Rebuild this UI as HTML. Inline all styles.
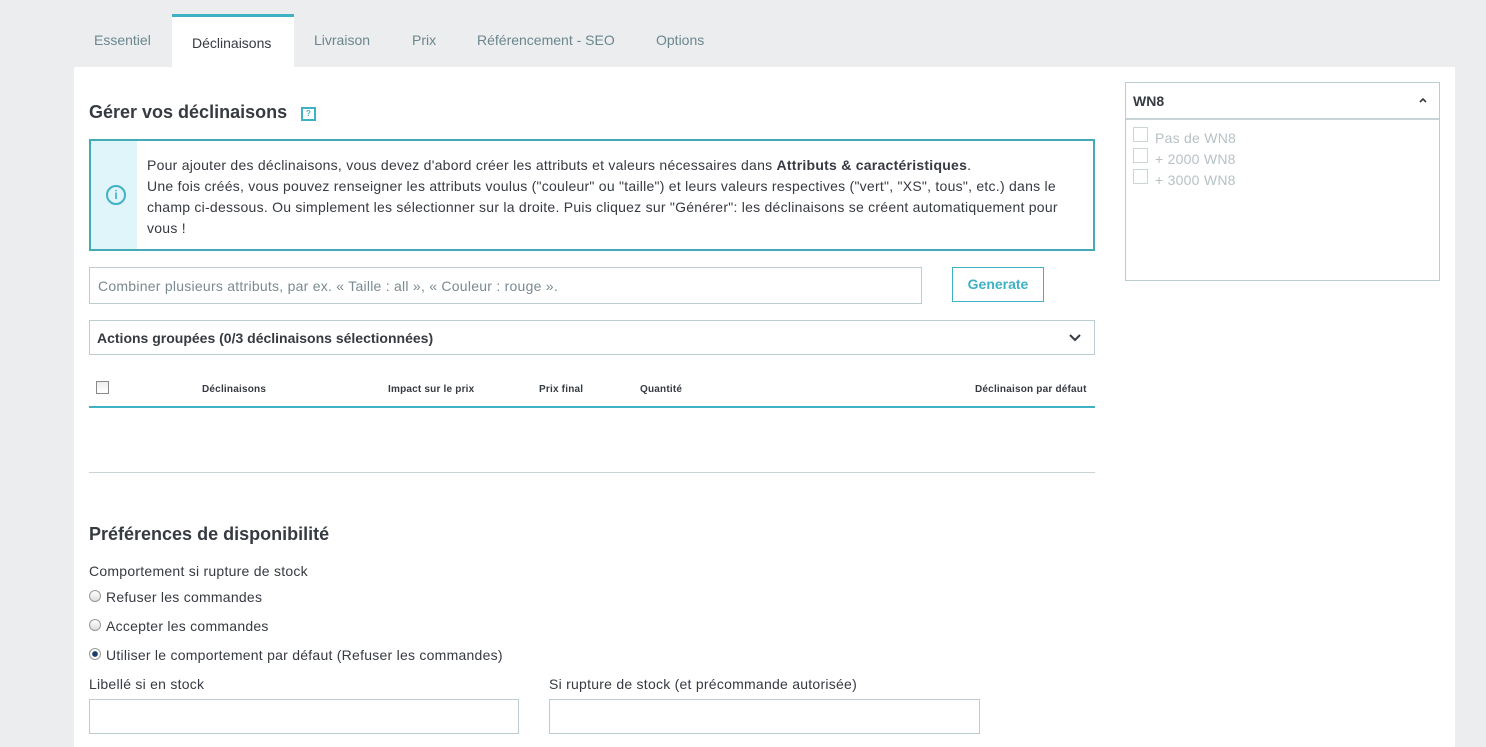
<!DOCTYPE html>
<html><head><meta charset="utf-8"><style>
*{margin:0;padding:0;box-sizing:border-box}
body{width:1486px;height:738px;overflow:hidden;background:#ebedef;font-family:"Liberation Sans",sans-serif;color:#363a41;position:relative}
.a{position:absolute;white-space:nowrap}
.tab{position:absolute;top:32px;font-size:14px;color:#6c868e}
.t{font-size:14px;letter-spacing:0.25px}
.in{position:absolute;border:1px solid #bbcdd2;background:#fff}
.rad{position:absolute;width:12px;height:12px;border:1px solid #999;border-radius:50%;background:linear-gradient(#fff,#ddd)}
.cb{position:absolute;width:15px;height:15px;border:1px solid #ccd5d8;background:#fff}
.th{position:absolute;top:384px;font-size:10px;font-weight:bold;color:#363a41;letter-spacing:0.2px}
</style></head><body>
<div class="tab" style="left:94px">Essentiel</div>
<div style="position:absolute;left:172px;top:14px;width:122px;height:54px;background:#fff;border-top:3px solid #3fb1c4"></div>
<div class="tab" style="left:192px;top:35px;color:#363a41">Déclinaisons</div>
<div class="tab" style="left:314px">Livraison</div>
<div class="tab" style="left:412px">Prix</div>
<div class="tab" style="left:477px">Référencement - SEO</div>
<div class="tab" style="left:656px">Options</div>
<div style="position:absolute;left:74px;top:67px;width:1381px;height:680px;background:#fff"></div>

<div class="a" style="left:89px;top:102px;font-size:18px;font-weight:bold">Gérer vos déclinaisons</div>
<div style="position:absolute;left:301px;top:107px;width:15px;height:14px;border:2px solid #3fb1c4;font-size:8px;color:#3fb1c4;text-align:center;line-height:10px;font-weight:bold">?</div>

<div style="position:absolute;left:89px;top:139px;width:1006px;height:112px;border:2px solid #43aab6;background:#fff">
 <div style="position:absolute;left:0;top:0;width:46px;height:108px;background:#dff5f9"></div>
 <div style="position:absolute;left:15px;top:44px;width:20px;height:20px;border:2px solid #3fb1c4;border-radius:50%;color:#3fb1c4;font-size:12px;font-weight:bold;text-align:center;line-height:16px">i</div>
 <div class="a t" style="left:56px;top:14px;line-height:21px">Pour ajouter des déclinaisons, vous devez d'abord créer les attributs et valeurs nécessaires dans <b>Attributs &amp; caractéristiques</b>.<br>Une fois créés, vous pouvez renseigner les attributs voulus ("couleur" ou "taille") et leurs valeurs respectives ("vert", "XS", tous", etc.) dans le<br>champ ci-dessous. Ou simplement les sélectionner sur la droite. Puis cliquez sur "Générer": les déclinaisons se créent automatiquement pour<br>vous !</div>
</div>

<div class="in" style="left:89px;top:267px;width:833px;height:37px"></div>
<div class="a t" style="left:98px;top:278px;color:#7a8a90">Combiner plusieurs attributs, par ex. « Taille : all », « Couleur : rouge ».</div>
<div style="position:absolute;left:952px;top:267px;width:92px;height:35px;border:1px solid #3fb1c4;color:#3fb1c4;font-size:14px;font-weight:bold;text-align:center;line-height:33px">Generate</div>

<div class="in" style="left:89px;top:320px;width:1006px;height:35px"></div>
<div class="a" style="left:97px;top:330px;font-size:14px;font-weight:bold">Actions groupées (0/3 déclinaisons sélectionnées)</div>
<svg style="position:absolute;left:1068px;top:333px" width="14" height="10"><path d="M2 2 L7 7 L12 2" stroke="#363a41" stroke-width="2" fill="none"/></svg>

<div style="position:absolute;left:96px;top:381px;width:13px;height:13px;border:1px solid #888;background:linear-gradient(#eee,#fff)"></div>
<div class="th" style="left:202px">Déclinaisons</div>
<div class="th" style="left:388px">Impact sur le prix</div>
<div class="th" style="left:539px">Prix final</div>
<div class="th" style="left:640px">Quantité</div>
<div class="th" style="left:975px">Déclinaison par défaut</div>
<div style="position:absolute;left:89px;top:406px;width:1006px;height:2px;background:#3fb1c4"></div>
<div style="position:absolute;left:89px;top:472px;width:1006px;height:1px;background:#c8d3d6"></div>

<div class="a" style="left:89px;top:524px;font-size:18px;font-weight:bold">Préférences de disponibilité</div>
<div class="a t" style="left:89px;top:563px">Comportement si rupture de stock</div>
<div class="rad" style="left:89px;top:590px"></div><div class="a t" style="left:106px;top:589px">Refuser les commandes</div>
<div class="rad" style="left:89px;top:619px"></div><div class="a t" style="left:106px;top:618px">Accepter les commandes</div>
<div class="rad" style="left:89px;top:648px;background:radial-gradient(circle,#1a3d6a 35%,#fff 45%)"></div><div class="a t" style="left:106px;top:647px">Utiliser le comportement par défaut (Refuser les commandes)</div>
<div class="a t" style="left:89px;top:676px">Libellé si en stock</div>
<div class="a t" style="left:549px;top:676px">Si rupture de stock (et précommande autorisée)</div>
<div class="in" style="left:89px;top:699px;width:430px;height:35px"></div>
<div class="in" style="left:549px;top:699px;width:431px;height:35px"></div>

<div class="in" style="left:1125px;top:82px;width:315px;height:199px"></div>
<div style="position:absolute;left:1126px;top:118px;width:313px;height:2px;background:#c8d3d6"></div>
<div class="a" style="left:1133px;top:93px;font-size:14px;font-weight:bold">WN8</div>
<svg style="position:absolute;left:1419px;top:97px" width="8" height="6"><path d="M1 5 L4 2 L7 5" stroke="#363a41" stroke-width="1.6" fill="none"/></svg>
<div class="cb" style="left:1133px;top:127px"></div><div class="a t" style="left:1155px;top:130px;color:#b7c1c5">Pas de WN8</div>
<div class="cb" style="left:1133px;top:148px"></div><div class="a t" style="left:1155px;top:151px;color:#b7c1c5">+ 2000 WN8</div>
<div class="cb" style="left:1133px;top:169px"></div><div class="a t" style="left:1155px;top:172px;color:#b7c1c5">+ 3000 WN8</div>
</body></html>
